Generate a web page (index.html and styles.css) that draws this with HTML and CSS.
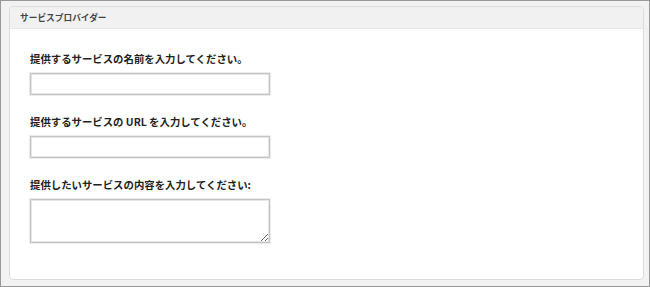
FILE: index.html
```html
<!DOCTYPE html>
<html lang="ja">
<head>
<meta charset="utf-8">
<link rel="stylesheet" href="styles.css">
</head>
<body>
<div class="frame">
  <div class="panel">
    <div class="panel-head">サービスプロバイダー</div>
    <div class="panel-body">
      <div class="field">
        <label class="label">提供するサービスの名前を入力してください。</label>
        <input class="input" type="text">
      </div>
      <div class="field">
        <label class="label">提供するサービスの URL を入力してください。</label>
        <input class="input" type="text">
      </div>
      <div class="field">
        <label class="label">提供したいサービスの内容を入力してください:</label>
        <textarea class="textarea"></textarea>
      </div>
    </div>
  </div>
</div>
</body>
</html>
```
FILE: styles.css
```css
html, body {
  margin: 0;
  padding: 0;
}
body {
  font-family: "Noto Sans CJK JP", "Noto Sans", sans-serif;
  color: #333;
}
.frame {
  box-sizing: border-box;
  width: 650px;
  height: 287px;
  border: 1px solid #999;
  background: #f2f2f2;
  padding: 5px 5px 6px 8px;
  display: flex;
}
.panel {
  flex: 1;
  background: #fff;
  border: 1px solid #dcdcdc;
  border-radius: 4px;
  display: flex;
  flex-direction: column;
}
.panel-head {
  height: 22px;
  box-sizing: border-box;
  background: #f1f1f1;
  border-bottom: 1px dotted #dedede;
  border-radius: 4px 4px 0 0;
  font-size: 8.7px;
  font-weight: bold;
  color: #444;
  line-height: 21px;
  padding-left: 10px;
}
.panel-body {
  padding: 23px 0 0 20px;
  display: flex;
  flex-direction: column;
  gap: 20px;
}
.field {
  display: flex;
  flex-direction: column;
  align-items: flex-start;
  gap: 7px;
}
.label {
  font-size: 10.4px;
  font-weight: bold;
  color: #222;
  line-height: 14px;
}
.input, .textarea {
  box-sizing: border-box;
  width: 240px;
  margin: 0;
  background: #fff;
  border: 1px solid #c4c4c4;
  box-shadow: 0 0 0 1px #ececec, inset 0 0 0 1px #e6e6e6;
  border-radius: 0;
  outline: none;
}
.input {
  height: 22px;
}
.textarea {
  height: 44px;
  resize: vertical;
}
```
